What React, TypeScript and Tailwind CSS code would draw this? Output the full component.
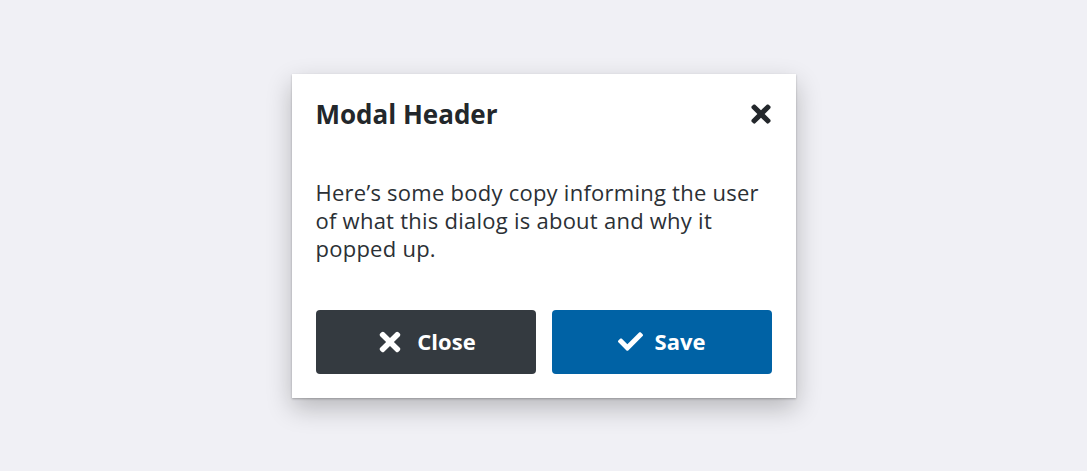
import { FaTimes, FaCheck } from 'react-icons/fa';

export default function App() {
  return (
    <div
      className="flex h-[471px] w-full items-center justify-center bg-[#f0f0f5]"
      style={{ fontFamily: '"Open Sans", "Liberation Sans", sans-serif' }}
    >
      {/* Dialog */}
      <div className="w-[504px] bg-white p-6 shadow-[0_1px_2px_rgba(0,0,0,0.25),0_10px_24px_rgba(0,0,0,0.24)]">
        <div className="flex h-8 items-center justify-between">
          <h2 className="text-[26px] font-bold leading-8 text-[#23272b]">Modal Header</h2>
          <button className="-mr-[3px] flex items-center justify-center text-[#23272b]">
            <FaTimes size={28} />
          </button>
        </div>

        <p className="my-12 text-[22px] leading-7 tracking-[0.25px] text-[#2b3035]">
          Here’s some body copy informing the user of what this dialog is about and why it
          popped up.
        </p>

        <div className="flex gap-4">
          <button className="flex h-16 flex-1 items-center justify-center gap-3 rounded bg-[#343a40] text-[22px] font-bold text-white">
            <FaTimes size={30} />
            Close
          </button>
          <button className="flex h-16 flex-1 items-center justify-center gap-3 rounded bg-[#0062a5] text-[22px] font-bold text-white">
            <FaCheck size={25} />
            Save
          </button>
        </div>
      </div>
    </div>
  );
}
